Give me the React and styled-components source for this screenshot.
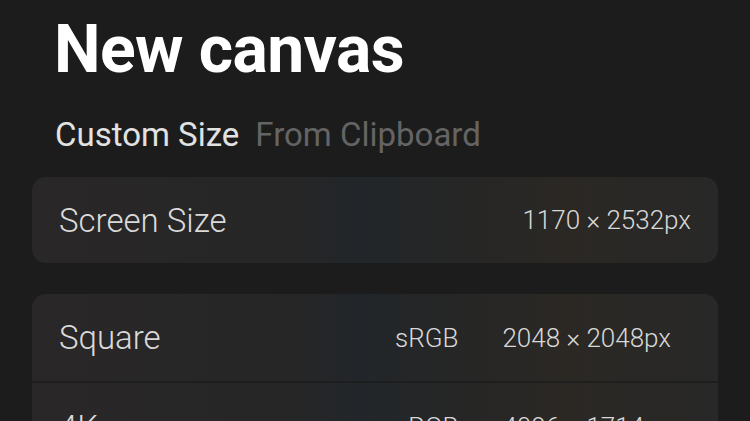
import React from 'react';
import styled, { createGlobalStyle } from 'styled-components';

const Global = createGlobalStyle`
  html, body {
    margin: 0;
    padding: 0;
    background: #1c1c1c;
    overflow: hidden;
  }
`;

const Page = styled.div`
  width: 750px;
  height: 421px;
  overflow: hidden;
  background: #1c1c1c;
  padding: 10px 32px 0;
  box-sizing: border-box;
  font-family: Roboto, "Liberation Sans", sans-serif;
`;

const Title = styled.h1`
  margin: 0 0 0 22px;
  font-family: Roboto, "Liberation Sans", sans-serif;
  font-weight: 700;
  font-size: 66px;
  letter-spacing: -0.6px;
  line-height: 80px;
  color: #ffffff;
`;

const Tabs = styled.div`
  display: flex;
  gap: 16px;
  margin: 22px 0 0 23px;
  height: 44px;
  align-items: center;
`;

const Tab = styled.span`
  font-size: 33px;
  font-weight: 400;
  color: ${({ active }) => (active ? '#e2e2e2' : '#646464')};
`;

const Card = styled.div`
  margin-top: ${({ top }) => top}px;
  border-radius: 14px;
  overflow: hidden;
  background: linear-gradient(
    90deg,
    #292727 0%,
    #272626 35%,
    #22262a 48%,
    #262626 62%,
    #2b2824 78%,
    #282828 100%
  );
`;

const Row = styled.div`
  display: flex;
  align-items: center;
  height: ${({ h }) => h}px;
  padding: 0 ${({ pr }) => pr}px 0 27px;
  border-top: ${({ divided }) => (divided ? '2px solid #1e1e1e' : 'none')};
`;

const Label = styled.span`
  flex: 1;
  font-size: 33px;
  font-weight: 300;
  color: #dadada;
`;

const Meta = styled.span`
  font-size: 26px;
  font-weight: 300;
  color: #d8d8d8;
  margin-left: ${({ gap }) => gap || 0}px;
`;

export default function App() {
  return (
    <Page>
      <Global />
      <Title>New canvas</Title>
      <Tabs>
        <Tab active>Custom Size</Tab>
        <Tab>From Clipboard</Tab>
      </Tabs>
      <Card top={21}>
        <Row h={86} pr={27}>
          <Label>Screen Size</Label>
          <Meta>1170 × 2532px</Meta>
        </Row>
      </Card>
      <Card top={31}>
        <Row h={87} pr={47}>
          <Label>Square</Label>
          <Meta>sRGB</Meta>
          <Meta gap={44}>2048 × 2048px</Meta>
        </Row>
        <Row h={88} pr={47} divided>
          <Label>4K</Label>
          <Meta>sRGB</Meta>
          <Meta gap={44}>4096 × 1714px</Meta>
        </Row>
      </Card>
    </Page>
  );
}
